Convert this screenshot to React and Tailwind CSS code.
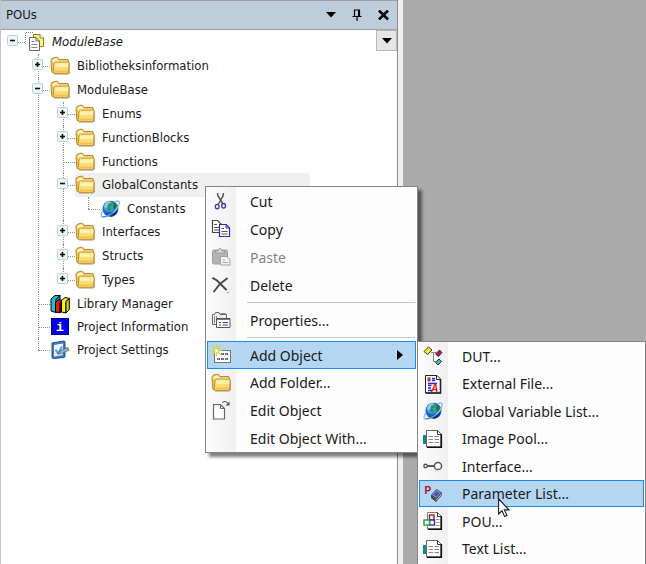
import { useState } from 'react'
import clsx from 'clsx'

function FolderIcon() {
  return (
    <svg viewBox="0 0 20 20" className="size-5 shrink-0">
      <path d="M4 18 H18 Q19.8 17.8 19.8 15.5 V7" fill="none" stroke="#8a7a58" strokeWidth="0.8" />
      <path d="M1 4.5 Q1 2.5 3 2 L6.5 1.2 Q7.8 1 8.3 2.2 L9 3.5 H17 Q18.5 3.5 18.5 5 V15.5 Q18.5 17 17 17 H3.5 Q2 17 1.8 15.5 Z" fill="#eec25a" stroke="#bd8a2a" />
      <path d="M2.2 4.2 Q3 3 6.8 2.3 L8.3 4.8 H17.5 V7 H3 Z" fill="#fff5c4" />
      <path d="M4 7.2 Q4 6 5.2 6 H18 Q19.2 6 19.2 7.2 L18.6 15.8 Q18.4 17.3 17 17.3 H4.5 Q3.2 17.3 3.2 15.8 Z" fill="#fcdc78" stroke="#c49230" />
      <path d="M5 7.2 H18 L17.8 11 H4.8 Z" fill="#fff1ae" />
      <path d="M4.5 14.5 H17.8 V16.3 H4.5 Z" fill="#f3c350" />
    </svg>
  )
}

function GlobeIcon() {
  return (
    <svg viewBox="0 0 20 20" className="size-5 shrink-0">
      <circle cx="10.5" cy="9.8" r="8" fill="#1b62c4" />
      <circle cx="9" cy="7.5" r="5.5" fill="#3f97ea" />
      <path d="M6 3.2 Q9 1.5 11 3 L10.5 6 L8 8 L5.5 9.5 L4 7.5 Z" fill="#7fd0ef" />
      <path d="M8 5 L12.5 3 L11.5 6.5 L9.5 7.5 L11 9.5 L10 13 L7 10 Z" fill="#2f9a3c" />
      <path d="M13 3.5 L17 6 L17.8 9.5 L15 12 L13 9 Z" fill="#1f7d30" />
      <path d="M6 15 Q12 17.5 17.5 11 Q17 16 11.5 17.8 Q8 17.8 6 15 Z" fill="#0b2f7c" />
      <path d="M3 11.5 Q-0.5 17.5 2.5 18 Q7 18.3 13 13.5 Q20 7 19.2 2.8 Q18.5 1 14.5 2.8" fill="none" stroke="#8cc4ee" strokeWidth="1.5" />
      <path d="M2.5 18 Q7 18.3 13 13.5" fill="none" stroke="#2a6fb8" strokeWidth="0.8" />
    </svg>
  )
}

function ProjectIcon() {
  return (
    <svg viewBox="0 0 20 20" className="size-5 shrink-0">
      <path d="M0.5 12 V0.5 H9" fill="none" stroke="#888" strokeDasharray="1 1" />
      <path d="M8.5 2.5 H15 L18.5 6 V14.5 H8.5 Z" fill="#fdf57c" stroke="#8c8430" />
      <path d="M15 2.5 V6 H18.5" fill="#fff" stroke="#8c8430" />
      <path d="M4.5 5.5 H11 L14.5 9 V18.5 H4.5 Z" fill="#fff" stroke="#666" />
      <path d="M11 5.5 V9 H14.5" fill="none" stroke="#666" />
      <path d="M6.5 9.5 H9.5 M6.5 12.5 H12.5 M6.5 15.5 H12.5" stroke="#888" />
    </svg>
  )
}

function LibraryIcon() {
  return (
    <svg viewBox="0 0 20 20" className="size-5 shrink-0">
      <path d="M1 5 L5 1.5 L10 1.5 L6 5.5 V18.5 L1 17 Z" fill="#18c5cc" stroke="#000" />
      <path d="M6 5.5 L10 1.5 V15 L6 18.5 Z" fill="#0a8a90" stroke="#000" />
      <path d="M5.5 8.5 L8.5 6 L12.5 6 L10 9 V18.8 L5.5 18 Z" fill="#f01818" stroke="#000" />
      <path d="M10 9 L12.5 6 V17 L10 18.8 Z" fill="#a00" stroke="#000" />
      <path d="M11.5 6.5 L15 3.5 L19.3 4.5 L16 7.5 V19 L11.5 18 Z" fill="#f8f020" stroke="#000" />
      <path d="M16 7.5 L19.3 4.5 V15.5 L16 19 Z" fill="#d8d010" stroke="#000" />
    </svg>
  )
}

function InfoIcon() {
  return (
    <svg viewBox="0 0 20 20" className="size-5 shrink-0">
      <rect x="1.5" y="1.5" width="17" height="16" fill="#0000e8" stroke="#000090" />
      <text x="10" y="14" textAnchor="middle" fill="#fff" fontSize="13" fontWeight="bold" fontFamily="Liberation Mono, monospace">i</text>
    </svg>
  )
}

function SettingsIcon() {
  return (
    <svg viewBox="0 0 20 20" className="size-5 shrink-0">
      <path d="M2 3 L14 1 Q15 1 15 2 V16 Q15 17.3 14 17.5 L3.5 18.5 Q2 18.5 2 17 Z" fill="#3b79c4" stroke="#234f8c" />
      <path d="M4 5 L13 3.5 V15 L4 16.5 Z" fill="#f2f7fd" />
      <path d="M5.5 9.5 L8 13.5 L12 6.5" fill="none" stroke="#5a93d0" strokeWidth="1.8" />
      <path d="M8 14 L10 10.8 L17.5 7.5 L19 10 L11.5 13.7 Z" fill="#8fb4d8" stroke="#3c5f88" strokeWidth="0.8" />
      <path d="M16 8 L18.3 7 L19.5 9.5 L17.3 10.8 Z" fill="#c98a4a" />
    </svg>
  )
}

function CutIcon() {
  return (
    <svg viewBox="0 0 20 20" className="size-5 shrink-0" fill="none">
      <path d="M6.5 2 L7 5 L12 13 M12.5 2 L12 5 L7.5 13" stroke="#555" strokeWidth="1.5" />
      <ellipse cx="6.2" cy="15.6" rx="1.9" ry="2.3" stroke="#3a3ab4" strokeWidth="1.3" />
      <ellipse cx="12.6" cy="14.8" rx="1.9" ry="2.3" stroke="#3a3ab4" strokeWidth="1.3" />
    </svg>
  )
}

function CopyIcon() {
  return (
    <svg viewBox="0 0 20 20" className="size-5 shrink-0">
      <path d="M1.5 1.5 H6.5 L9.5 4.5 V13.5 H1.5 Z" fill="#fff" stroke="#444" strokeWidth="1.2" />
      <path d="M3 5.5 H6 M3 8.5 H8 M3 11 H8" stroke="#555" />
      <path d="M8.5 5.5 H15 L18.5 9 V17.5 H8.5 Z" fill="#fff" stroke="#2d2da8" strokeWidth="1.2" />
      <path d="M15 5.5 V9 H18.5" fill="none" stroke="#2d2da8" />
      <path d="M10.5 9.5 H13 M10.5 12.5 H16.5 M10.5 15 H16.5" stroke="#555" />
    </svg>
  )
}

function PasteIcon() {
  return (
    <svg viewBox="0 0 20 20" className="size-5 shrink-0">
      <rect x="1.5" y="3" width="15" height="14" rx="1.5" fill="#b4b4b4" stroke="#a0a0a0" />
      <path d="M4.5 6 V4 H7 Q7.5 1.5 9 1.5 Q10.5 1.5 11 4 H13.5 V6 Z" fill="#ddd" stroke="#999" />
      <path d="M9.5 9.5 H15.5 L19 12.5 V18 H9.5 Z" fill="#f4f4f4" stroke="#a0a0a0" />
      <path d="M11.5 13 H14 M11.5 15.5 H17" stroke="#a8a8a8" />
    </svg>
  )
}

function DeleteIcon() {
  return (
    <svg viewBox="0 0 20 20" className="size-5 shrink-0" fill="none" stroke="#4a4a4a" strokeLinecap="round">
      <path d="M2 3.2 L6 5.5 L15 14.5" strokeWidth="2" />
      <path d="M16 3.5 L9 9 L3 16.5" strokeWidth="1.9" />
      <path d="M16.8 17.5 H17" strokeWidth="1" />
    </svg>
  )
}

function PropertiesIcon() {
  return (
    <svg viewBox="0 0 20 20" className="size-5 shrink-0">
      <path d="M1.5 14.5 V4.5 H3.5 L4.5 2.5 H8 L9 4.5 H15.5 V14.5 Z" fill="#eee" stroke="#666" />
      <path d="M9.5 3.5 H14.5 M3.5 6 V13 M5.5 6 V13" stroke="#888" />
      <path d="M5.5 8.5 H19 V17.5 H5.5 Z" fill="#fff" stroke="#555" />
      <path d="M6 9.5 H19" stroke="#777" />
      <path d="M8 12.5 H10 M8 15 H10" stroke="#444" />
      <path d="M11.5 12.5 H17 M11.5 15 H17" stroke="#3a3ab4" />
    </svg>
  )
}

function AddObjectIcon() {
  return (
    <svg viewBox="0 0 20 20" className="size-5 shrink-0">
      <rect x="3.5" y="5.5" width="16" height="12" fill="#fff" stroke="#777" />
      <path d="M6 13 h1.5 v2 h-1.5 Z M10 8 h1.5 v2 h-1.5 Z M14 13 h1.5 v2 h-1.5 Z" fill="#3c9a58" />
      <path d="M11.5 13 h1.5 v2 h-1.5 Z M14 8 h1.5 v2 h-1.5 Z M7.5 13 h1.5 v2 h-1.5 Z" fill="#c84040" />
      <path d="M11.5 8 h1.5 v2 h-1.5 Z M15.5 8 h1.5 v2 h-1.5 Z M15.5 13 h1.5 v2 h-1.5 Z M10 13 h1.5 v2 h-1.5 Z" fill="#4058b8" />
      <path d="M5.5 0 V11 M0 5.5 H11 M1 1 L10 10 M10 1 L1 10" stroke="#ddd43c" strokeWidth="1.3" />
      <circle cx="5.5" cy="5.5" r="1.6" fill="#fffde0" />
    </svg>
  )
}

function EditObjectIcon() {
  return (
    <svg viewBox="0 0 20 20" className="size-5 shrink-0">
      <path d="M2.5 4.5 H9.5 L13.5 8.5 V19 H2.5 Z" fill="#fff" stroke="#666" strokeWidth="1.2" />
      <path d="M9.5 4.5 V8.5 H13.5" fill="none" stroke="#666" />
      <path d="M11 2.5 Q14 0 17 3" fill="none" stroke="#555" />
      <path d="M18.5 1.5 V5.5 H14.5 Z" fill="#555" />
    </svg>
  )
}

function DutIcon() {
  return (
    <svg viewBox="0 0 20 20" className="size-5 shrink-0">
      <path d="M8 6.5 H13 M10.5 6.5 V15.5 H13" fill="none" stroke="#888" />
      <path d="M1 5.5 L5.5 1 L9 4 L4.5 8.5 Z" fill="#f5ee20" stroke="#333" />
      <path d="M12.5 8 L16.5 4 L19 6.5 L15.5 10.5 Z" fill="#b0186c" stroke="#333" />
      <path d="M12.5 16.5 L16 13 L18.5 15.5 L15 19 Z" fill="#48b8b0" stroke="#333" />
    </svg>
  )
}

function ExternalFileIcon() {
  return (
    <svg viewBox="0 0 20 20" className="size-5 shrink-0">
      <path d="M2.5 1.5 H14 L17.5 5 V19 H2.5 Z" fill="#fff" stroke="#222" />
      <path d="M17.5 5 V19 H3" fill="none" stroke="#222" strokeWidth="1.6" />
      <path d="M13.5 1.5 V5.5 H17.5" fill="none" stroke="#222" />
      <rect x="4.5" y="3.5" width="3" height="4" fill="#c03030" />
      <path d="M9 4.5 H12 M9 6.5 H12 M5 9.5 H14 M5 11.5 H8.5 M5 14 H8 M5 16.5 H9" stroke="#2828d8" strokeWidth="1.3" />
      <text x="8" y="17.5" fill="#f01010" fontSize="10" fontWeight="bold" fontStyle="italic" fontFamily="Liberation Sans, sans-serif">A</text>
    </svg>
  )
}

function ListFileIcon() {
  return (
    <svg viewBox="0 0 20 20" className="size-5 shrink-0">
      <rect x="0" y="6" width="4" height="9" fill="#17868a" />
      <path d="M3.5 1.5 H14.5 L18 5 V18 H3.5 Z" fill="#fff" stroke="#666" />
      <path d="M18.3 5 V18.3 H4" fill="none" stroke="#111" strokeWidth="1.6" />
      <path d="M14.5 1.5 V5.5 H18" fill="none" stroke="#333" />
      <path d="M5.5 7.5 H10 M11.5 7.5 H16 M5.5 10.5 H10 M11.5 10.5 H16 M5.5 13.5 H10 M11.5 13.5 H16" stroke="#888" />
    </svg>
  )
}

function InterfaceIcon() {
  return (
    <svg viewBox="0 0 20 20" className="size-5 shrink-0" fill="#fff" stroke="#555">
      <path d="M4 10 H11.5" strokeWidth="2" />
      <circle cx="2.6" cy="10" r="1.7" strokeWidth="1.4" />
      <circle cx="15" cy="10" r="3.6" strokeWidth="1.5" />
    </svg>
  )
}

function ParameterIcon() {
  return (
    <svg viewBox="0 0 20 20" className="size-5 shrink-0">
      <text x="1.5" y="10" fill="#b01030" fontSize="10" fontWeight="bold" fontFamily="Liberation Sans, sans-serif">P</text>
      <path d="M8 11 L13.5 5 L18.8 8.5 V11.5 L13 18 L8 14 Z" fill="#454a55" />
      <path d="M8.8 10.8 L13.5 5.8 L18 8.8 L13 14.2 Z" fill="#8088a0" />
      <path d="M10.8 10.4 L13.5 7.4 L16.2 9.2 L13.2 12.4 Z" fill="#2f4cf0" />
      <path d="M13.2 16.2 L18.4 10.4" stroke="#d8dce6" strokeWidth="0.9" />
    </svg>
  )
}

function PouIcon() {
  return (
    <svg viewBox="0 0 20 20" className="size-5 shrink-0">
      <path d="M4.5 1.5 H14.5 L18 5 V18 H4.5 Z" fill="#fff" stroke="#777" />
      <path d="M18.3 5 V18.3 H5" fill="none" stroke="#111" strokeWidth="1.6" />
      <path d="M14.5 1.5 V5.5 H18" fill="none" stroke="#333" />
      <path d="M13 8.5 H16.5 M13 11.5 H16.5 M13 14.5 H16.5" stroke="#999" />
      <rect x="6.5" y="4" width="4.5" height="5" fill="#fff" stroke="#b01830" strokeWidth="1.4" />
      <rect x="6.5" y="9" width="5" height="5" fill="#fff" stroke="#2828b0" strokeWidth="1.4" />
      <rect x="1" y="9" width="5.5" height="5" fill="#fff" stroke="#20a030" strokeWidth="1.4" />
    </svg>
  )
}

const tree = {
  label: 'ModuleBase',
  icon: ProjectIcon,
  italic: true,
  children: [
    { label: 'Bibliotheksinformation', icon: FolderIcon, closed: true },
    {
      label: 'ModuleBase',
      icon: FolderIcon,
      children: [
        { label: 'Enums', icon: FolderIcon, closed: true },
        { label: 'FunctionBlocks', icon: FolderIcon, closed: true },
        { label: 'Functions', icon: FolderIcon },
        {
          label: 'GlobalConstants',
          icon: FolderIcon,
          selected: true,
          children: [{ label: 'Constants', icon: GlobeIcon }],
        },
        { label: 'Interfaces', icon: FolderIcon, closed: true },
        { label: 'Structs', icon: FolderIcon, closed: true },
        { label: 'Types', icon: FolderIcon, closed: true },
      ],
    },
    { label: 'Library Manager', icon: LibraryIcon },
    { label: 'Project Information', icon: InfoIcon },
    { label: 'Project Settings', icon: SettingsIcon },
  ],
}

const addObjectItems = [
  { label: 'DUT...', icon: DutIcon },
  { label: 'External File...', icon: ExternalFileIcon },
  { label: 'Global Variable List...', icon: GlobeIcon },
  { label: 'Image Pool...', icon: ListFileIcon },
  { label: 'Interface...', icon: InterfaceIcon },
  { label: 'Parameter List...', icon: ParameterIcon, active: true },
  { label: 'POU...', icon: PouIcon },
  { label: 'Text List...', icon: ListFileIcon },
]

function Expander({ open, onClick, label }) {
  return (
    <button type="button" aria-label={label} aria-expanded={open} onClick={onClick} className="relative">
      <svg viewBox="0 0 12 20" className="h-5 w-3">
        <rect x="0.5" y="3.5" width="10" height="10" rx="1" fill="#eef6f6" stroke="#b4d4d8" />
        <path d="M3 8.5 H8" stroke="#111" strokeWidth="1.6" />
        {!open && <path d="M5.5 6 V11" stroke="#111" strokeWidth="1.6" />}
      </svg>
    </button>
  )
}

function TreeNode({ node, level = 0, last = false }) {
  const [open, setOpen] = useState(!node.closed)
  const Icon = node.icon
  const branch = node.children || node.closed

  return (
    <li className="relative">
      {level > 0 && (
        <span className={clsx('absolute top-0 left-3 border-l border-dotted border-[#909090]', last ? 'h-3' : 'h-full')} />
      )}
      <div className={clsx('flex items-center', branch ? 'h-6' : 'h-[23px]')}>
        <div className="relative flex h-5 w-6 shrink-0 justify-center">
          <span className="absolute top-1/2 right-0 left-3 border-t border-dotted border-[#909090]" />
          {branch && <Expander open={open} label={node.label} onClick={() => setOpen(!open)} />}
        </div>
        <div className={clsx('flex h-full items-center gap-[7px]', node.selected && 'w-[235px] bg-[#f0f0f0]')}>
          <Icon />
          <span className={clsx('whitespace-nowrap', node.italic && 'italic')}>{node.label}</span>
        </div>
      </div>
      {node.children && open && (
        <ul className="pl-[25px]">
          {node.children.map((child, i) => (
            <TreeNode key={child.label} node={child} level={level + 1} last={i === node.children.length - 1} />
          ))}
        </ul>
      )}
    </li>
  )
}

function MenuItem({ icon: Icon, label, active, disabled, arrow, className = 'h-7', children }) {
  return (
    <li className={clsx('relative mx-px', className)}>
      <button
        type="button"
        disabled={disabled}
        className={clsx(
          'flex h-full w-full items-center gap-[19px] border pl-[3px] text-left whitespace-nowrap',
          active ? 'border-[#1f8be6] bg-[#b3d6f3]' : 'border-transparent',
          disabled && 'text-[#858585]'
        )}
      >
        {Icon ? <Icon /> : <span className="size-5 shrink-0" />}
        <span className="flex-1">{label}</span>
        {arrow && (
          <svg viewBox="0 0 6 10" className="mr-3 h-2.5 w-1.5">
            <path d="M0 0 L6 5 L0 10 Z" />
          </svg>
        )}
      </button>
      {children}
    </li>
  )
}

function Separator() {
  return (
    <li className="flex h-[7px] items-center pr-0.5 pl-[41px]">
      <hr className="w-full border-[#c4c4c4]" />
    </li>
  )
}

function Menu({ className, children }) {
  return (
    <ul
      className={clsx(
        'absolute border border-[#858585] bg-[linear-gradient(to_right,#fcfcfc_0,#f0f0f0_30px,#fdfdfd_30px)] font-["Noto_Sans",sans-serif] text-[14px] text-[#1a1a1a] shadow-[4px_4px_3px_rgba(0,0,0,0.5)]',
        className
      )}
    >
      {children}
    </ul>
  )
}

function ContextMenu() {
  return (
    <Menu className="top-[186px] left-[205px] w-[213px]">
      <MenuItem icon={CutIcon} label="Cut" />
      <MenuItem icon={CopyIcon} label="Copy" />
      <MenuItem icon={PasteIcon} label="Paste" disabled />
      <MenuItem icon={DeleteIcon} label="Delete" />
      <Separator />
      <MenuItem icon={PropertiesIcon} label="Properties..." />
      <Separator />
      <MenuItem icon={AddObjectIcon} label="Add Object" active arrow>
        <Menu className="top-0 left-full ml-px w-[229px] pb-1">
          {addObjectItems.map((item) => (
            <MenuItem key={item.label} {...item} className="odd:h-7 even:h-[27px]" />
          ))}
        </Menu>
      </MenuItem>
      <MenuItem icon={FolderIcon} label="Add Folder..." className="h-[27px]" />
      <MenuItem icon={EditObjectIcon} label="Edit Object" />
      <MenuItem label="Edit Object With..." />
    </Menu>
  )
}

export default function App() {
  return (
    <div className="relative flex h-screen overflow-hidden bg-[#ababab] font-['DejaVu_Sans_Condensed','DejaVu_Sans',sans-serif] text-[13px] text-[#1a1a1a]">
      <aside className="flex w-[398px] shrink-0 flex-col border-r border-l border-[#8c8c8c] border-l-[#c4c4c4] bg-white">
        <header className="flex h-[30px] items-center border-t border-b border-[#a0a0a0] bg-[#bfcddb] pr-px pl-[5px]">
          <h1 className="flex-1">POUs</h1>
          <button type="button" aria-label="Window position" className="flex w-[26px] justify-center">
            <svg viewBox="0 0 10 6" className="h-1.5 w-2.5">
              <path d="M0 0 H10 L5 5.5 Z" />
            </svg>
          </button>
          <button type="button" aria-label="Auto hide" className="flex w-[26px] justify-center">
            <svg viewBox="0 0 10 12" className="h-3 w-2.5" fill="none" stroke="#000">
              <path d="M2.5 7 V1 H7.5 V7 M0.5 7.5 H9.5 M5 8 V12" strokeWidth="1.2" />
              <path d="M6.8 1 V7" strokeWidth="1.6" />
            </svg>
          </button>
          <button type="button" aria-label="Close" className="flex w-[26px] justify-center">
            <svg viewBox="0 0 11 10" className="h-2.5 w-[11px]" stroke="#000" strokeWidth="2.6">
              <path d="M1 0.5 L10 9.5 M10 0.5 L1 9.5" />
            </svg>
          </button>
        </header>
        <div className="flex min-h-0 flex-1 items-start">
          <ul className="flex-1">
            <TreeNode node={tree} />
          </ul>
          <button type="button" aria-label="Show menu" className="flex h-[21px] w-[21px] items-center justify-center border border-[#b8b8b8] bg-[#e6e6e6]">
            <svg viewBox="0 0 10 6" className="h-1.5 w-2.5">
              <path d="M0 0 H10 L5 5.5 Z" />
            </svg>
          </button>
        </div>
      </aside>
      <div className="w-[5px] shrink-0 bg-[#f0f0f0]" />
      <main className="flex-1" />

      <ContextMenu />

      <svg viewBox="0 0 12 20" className="pointer-events-none absolute top-[498px] left-[498px] h-5 w-3">
        <path d="M0.6 0.8 V16 L4 12.8 L6.6 18.6 L9 17.5 L6.4 11.9 H11 Z" fill="#fff" stroke="#1a1a2a" strokeWidth="1.1" />
      </svg>
    </div>
  )
}
